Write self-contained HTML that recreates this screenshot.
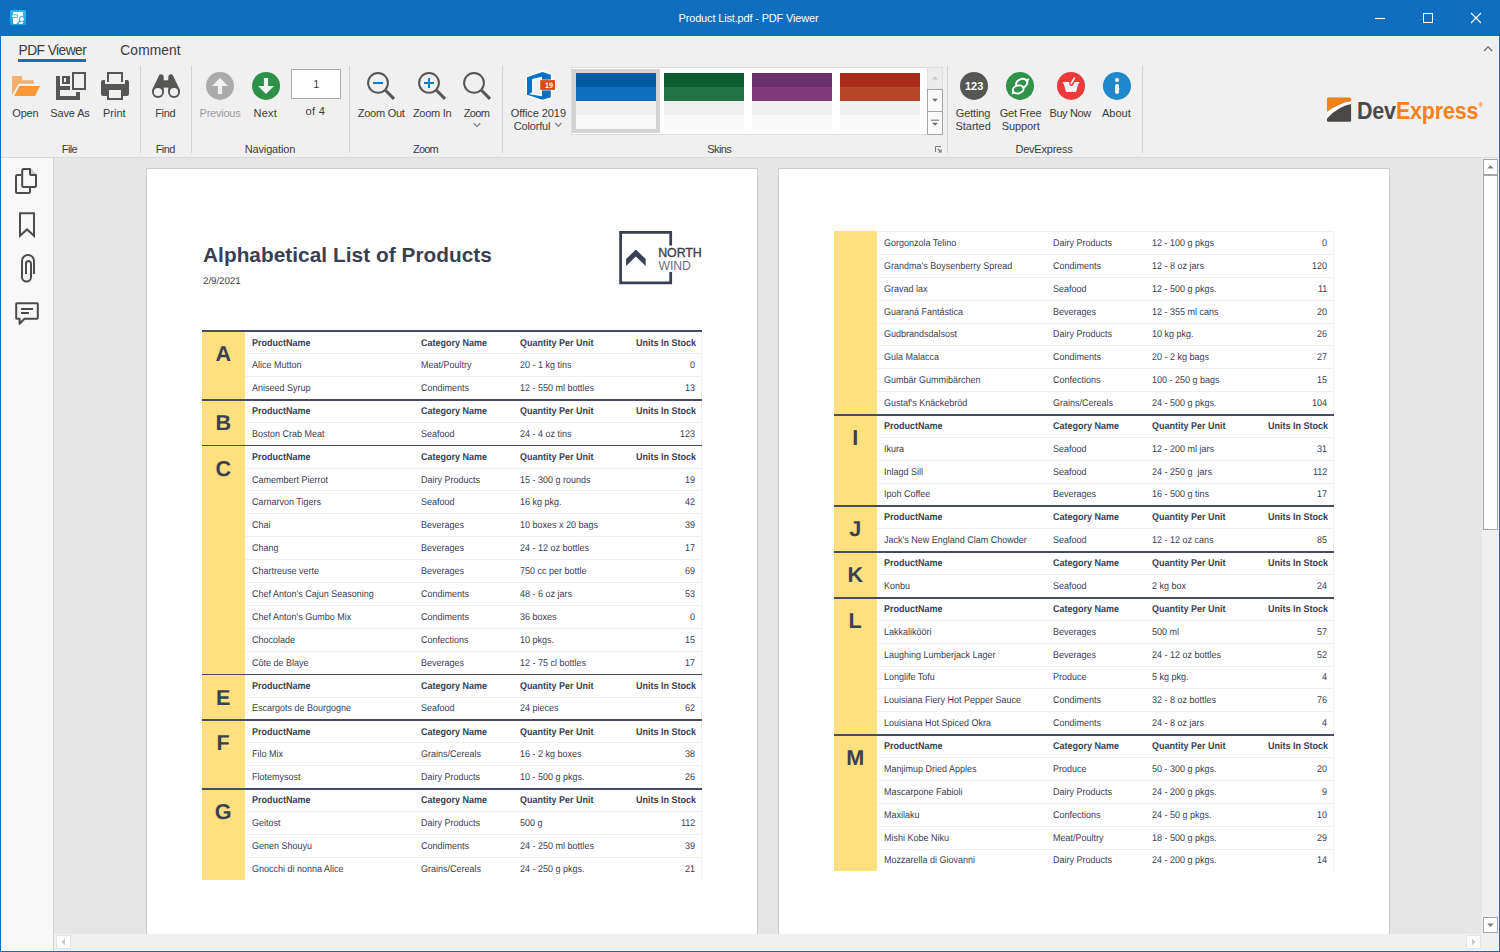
<!DOCTYPE html>
<html><head><meta charset="utf-8"><title>Product List.pdf - PDF Viewer</title>
<style>
html,body{margin:0;padding:0}
body{width:1500px;height:952px;position:relative;overflow:hidden;background:#f0f0f0;font-family:"Liberation Sans",sans-serif}
.t{position:absolute;white-space:pre;line-height:1;margin:0;padding:0}
.r{position:absolute;margin:0;padding:0}
.a{position:absolute;overflow:visible}
</style></head>
<body>
<div class="r" style="left:0px;top:0px;width:1500px;height:36px;background:#106ebe;"></div>
<div class="r" style="left:1px;top:36px;width:1498px;height:121px;background:#f0f0f0;"></div>
<div class="r" style="left:1px;top:157px;width:1498px;height:1px;background:#d9d9d9;"></div>
<svg class="a" style="left:9px;top:9px" width="18" height="18" viewBox="9 9 18 18">
<defs><linearGradient id="ai" x1="0" y1="0" x2="0" y2="1"><stop offset="0" stop-color="#2db8f1"/><stop offset="1" stop-color="#1b9fdc"/></linearGradient></defs>
<rect x="10" y="10" width="16" height="15.3" rx="1.6" fill="url(#ai)"/>
<rect x="13" y="12.1" width="10.1" height="11.8" rx="0.8" fill="#fff"/>
<rect x="11.4" y="14.4" width="6.4" height="3.4" rx="0.9" fill="#25aeea"/>
<rect x="12" y="15.2" width="5" height="1.8" rx="0.4" fill="#fff"/>
<path d="M21 20 L17 24.2" stroke="#25aeea" stroke-width="1.3" fill="none"/>
<circle cx="21.9" cy="18.9" r="2.9" fill="#25aeea"/>
<circle cx="21.9" cy="18.9" r="2" fill="#fff"/>
</svg>
<div class="t" style="left:678.50px;top:13px;font-size:11px;color:#ffffff;letter-spacing:-0.162px;">Product List.pdf - PDF Viewer</div>
<svg class="a" style="left:1370px;top:8px" width="120" height="20" viewBox="1370 8 120 20" shape-rendering="crispEdges">
<rect x="1375" y="18" width="10" height="1" fill="#fff"/>
<rect x="1423.5" y="13.5" width="9" height="9" fill="none" stroke="#fff" stroke-width="1"/>
<path d="M1471 13 L1481 23 M1481 13 L1471 23" stroke="#fff" stroke-width="1.1" fill="none" shape-rendering="geometricPrecision"/>
</svg>
<svg class="a" style="left:1482px;top:44px" width="12" height="10" viewBox="1482 44 12 10"><path d="M1484 51 L1488.1 46.9 L1492.2 51" stroke="#6b6b6b" stroke-width="1.3" fill="none"/></svg>
<div class="t" style="left:18.60px;top:44px;font-size:13.8px;color:#3b3b3b;letter-spacing:-0.577px;">PDF Viewer</div>
<div class="r" style="left:18px;top:59px;width:68px;height:3px;background:#106ebe;"></div>
<div class="t" style="left:120.30px;top:44px;font-size:13.8px;color:#3b3b3b;letter-spacing:0.098px;">Comment</div>
<div class="r" style="left:140px;top:66px;width:1px;height:87px;background:#d2d2d2;"></div>
<div class="r" style="left:191px;top:66px;width:1px;height:87px;background:#d2d2d2;"></div>
<div class="r" style="left:349px;top:66px;width:1px;height:87px;background:#d2d2d2;"></div>
<div class="r" style="left:502px;top:66px;width:1px;height:87px;background:#d2d2d2;"></div>
<div class="r" style="left:947px;top:66px;width:1px;height:87px;background:#d2d2d2;"></div>
<div class="r" style="left:1142px;top:66px;width:1px;height:87px;background:#d2d2d2;"></div>
<div class="t" style="left:61.80px;top:144px;font-size:11px;color:#3b3b3b;letter-spacing:-0.606px;">File</div>
<div class="t" style="left:155.65px;top:144px;font-size:11px;color:#3b3b3b;letter-spacing:-0.525px;">Find</div>
<div class="t" style="left:244.70px;top:144px;font-size:11px;color:#3b3b3b;letter-spacing:-0.138px;">Navigation</div>
<div class="t" style="left:413.00px;top:144px;font-size:11px;color:#3b3b3b;letter-spacing:-0.779px;">Zoom</div>
<div class="t" style="left:707.35px;top:144px;font-size:11px;color:#3b3b3b;letter-spacing:-0.640px;">Skins</div>
<div class="t" style="left:1015.50px;top:144px;font-size:11px;color:#3b3b3b;letter-spacing:-0.230px;">DevExpress</div>
<div class="t" style="left:12.30px;top:108px;font-size:11px;color:#3b3b3b;letter-spacing:-0.227px;">Open</div>
<div class="t" style="left:50.25px;top:108px;font-size:11px;color:#3b3b3b;letter-spacing:-0.123px;">Save As</div>
<div class="t" style="left:103.05px;top:108px;font-size:11px;color:#3b3b3b;letter-spacing:-0.024px;">Print</div>
<div class="t" style="left:155.20px;top:108px;font-size:11px;color:#3b3b3b;letter-spacing:-0.350px;">Find</div>
<div class="t" style="left:199.60px;top:108px;font-size:11px;color:#9b9b9b;letter-spacing:-0.250px;">Previous</div>
<div class="t" style="left:253.60px;top:108px;font-size:11px;color:#3b3b3b;letter-spacing:0.196px;">Next</div>
<div class="t" style="left:305.55px;top:106px;font-size:11px;color:#3b3b3b;letter-spacing:0.288px;">of 4</div>
<div class="t" style="left:357.70px;top:108px;font-size:11px;color:#3b3b3b;letter-spacing:-0.238px;">Zoom Out</div>
<div class="t" style="left:412.95px;top:108px;font-size:11px;color:#3b3b3b;letter-spacing:-0.293px;">Zoom In</div>
<div class="t" style="left:463.70px;top:108px;font-size:11px;color:#3b3b3b;letter-spacing:-0.629px;">Zoom</div>
<div class="t" style="left:510.65px;top:108px;font-size:11px;color:#3b3b3b;letter-spacing:-0.069px;">Office 2019</div>
<div class="t" style="left:513.65px;top:121px;font-size:11px;color:#3b3b3b;letter-spacing:-0.151px;">Colorful</div>
<div class="t" style="left:955.75px;top:108px;font-size:11px;color:#3b3b3b;letter-spacing:-0.138px;">Getting</div>
<div class="t" style="left:955.45px;top:121px;font-size:11px;color:#3b3b3b;letter-spacing:-0.024px;">Started</div>
<div class="t" style="left:999.70px;top:108px;font-size:11px;color:#3b3b3b;letter-spacing:-0.225px;">Get Free</div>
<div class="t" style="left:1001.70px;top:121px;font-size:11px;color:#3b3b3b;letter-spacing:-0.075px;">Support</div>
<div class="t" style="left:1049.45px;top:108px;font-size:11px;color:#3b3b3b;letter-spacing:-0.388px;">Buy Now</div>
<div class="t" style="left:1102.00px;top:108px;font-size:11px;color:#3b3b3b;letter-spacing:0.011px;">About</div>
<div class="r" style="left:291px;top:69px;width:50px;height:30px;background:#ffffff;border:1px solid #ababab;box-sizing:border-box;"></div>
<div class="t" style="left:313.24px;top:79px;font-size:11px;color:#3b3b3b;">1</div>
<svg class="a" style="left:0;top:60px" width="1500" height="100" viewBox="0 60 1500 100">
<path d="M12.1 76.6 Q12.1 76.1 12.6 76.1 H21.5 Q22 76.1 22 76.6 V80.3 H33.4 Q33.9 80.3 33.9 80.8 V83.85 H18.6 L12.1 95.2 Z" fill="#f5ae6b"/>
<path d="M19.4 86.1 H40.1 L35 95.9 H14.2 Z" fill="#fb9838"/>
<g fill="#565654"><rect x="56" y="76" width="4" height="24"/><rect x="56" y="96" width="24" height="4"/><rect x="76" y="92" width="4" height="8"/><rect x="60" y="86" width="10" height="4"/><rect x="62" y="76" width="8" height="8"/></g>
<rect x="64" y="78" width="2" height="4" fill="#f0f0f0"/>
<rect x="73" y="73" width="12" height="16" fill="none" stroke="#565654" stroke-width="2"/>
<path d="M108 82 V73 H122 V82" fill="none" stroke="#565654" stroke-width="2"/>
<path d="M103 80 H105 V84 H125 V80 H127 Q129 80 129 82 V94 Q129 96 127 96 H123 V100 H107 V96 H103 Q101 96 101 94 V82 Q101 80 103 80 Z" fill="#565654"/>
<rect x="109" y="90" width="12" height="8" fill="#f0f0f0"/>
<g fill="#565654"><circle cx="158" cy="92" r="6"/><circle cx="174" cy="92" r="6"/><path d="M158.55 76.4 A2.6 2.6 0 0 1 163.7 76.8 V92 H152 L152.3 89.6 Z"/><path d="M173.45 76.4 A2.6 2.6 0 0 0 168.3 76.8 V92 H180 L179.7 89.6 Z"/><rect x="163" y="80.3" width="6" height="7.3"/></g>
<circle cx="158" cy="92" r="4.1" fill="#f0f0f0"/><circle cx="174" cy="92" r="4.1" fill="#f0f0f0"/>
<circle cx="220" cy="85.9" r="14" fill="#ababab"/>
<path d="M220 78 L228 86 H222.1 V93.9 H217.9 V86 H212 Z" fill="#f1f1f1"/>
<circle cx="266.05" cy="85.9" r="14" fill="#2f9148"/>
<path d="M266 94 L274 86 H268.05 V78 H263.95 V86 H258 Z" fill="#f1f1f1"/>
<circle cx="378" cy="82.9" r="9.9" fill="none" stroke="#565654" stroke-width="2"/>
<path d="M385.4 90.3 L394 98.9" stroke="#565654" stroke-width="3" fill="none"/>
<rect x="373" y="82" width="10" height="2" fill="#0b7ccf"/>
<circle cx="429" cy="82.9" r="9.9" fill="none" stroke="#565654" stroke-width="2"/>
<path d="M436.4 90.3 L445 98.9" stroke="#565654" stroke-width="3" fill="none"/>
<rect x="424" y="82" width="10" height="2" fill="#0b7ccf"/>
<rect x="428" y="78" width="2" height="10" fill="#0b7ccf"/>
<circle cx="474" cy="82.9" r="9.9" fill="none" stroke="#565654" stroke-width="2"/>
<path d="M481.4 90.3 L490 98.9" stroke="#565654" stroke-width="3" fill="none"/>
<path d="M473.7 123.3 L477 126.5 L480.3 123.3" stroke="#7f7f7f" stroke-width="1.2" fill="none"/>
<path d="M555.3 123 L558.3 126.3 L561.3 123" stroke="#7f7f7f" stroke-width="1.2" fill="none"/>
<path d="M527 77.3 L542.4 71.9 L550.8 74.8 V97.3 L542.4 99.8 L527 94.8 Z" fill="#0672c6" stroke="#fff" stroke-width="3.2" stroke-linejoin="round"/>
<path d="M527 77.3 L542.4 71.9 L550.8 74.8 V97.3 L542.4 99.8 L527 94.8 Z" fill="#0672c6"/>
<path d="M532.1 79 L542 76.7 V96.3 L529.2 94.3 L532.1 92 Z" fill="#fff"/>
<path d="M533.6 80.2 L540.6 78.6 V94.6 L533.6 93 Z" fill="#f0f0f0"/>
<rect x="539.7" y="79.6" width="15.8" height="10.8" fill="#fff"/><rect x="540.2" y="80.1" width="14.8" height="9.8" fill="#df4a0e"/>
<text x="545.0" y="87.9" font-family="Liberation Sans" font-weight="bold" font-size="8" textLength="7.9" lengthAdjust="spacingAndGlyphs" fill="#fff" text-rendering="geometricPrecision">19</text>
<circle cx="974" cy="85.9" r="14" fill="#565654"/>
<circle cx="1020" cy="85.9" r="14" fill="#30934a"/>
<circle cx="1071" cy="85.9" r="14" fill="#ec3b3b"/>
<circle cx="1117" cy="85.9" r="14" fill="#1f88cd"/>
<g stroke="#fff" stroke-width="2" stroke-linejoin="round"><path d="M1025.6 79.6 L1029 78.9 L1027.6 82.2 Z" fill="#fff" stroke-width="0.8"/><ellipse cx="1021.7" cy="83.4" rx="5.7" ry="4.4" transform="rotate(-22 1021.7 83.4)" fill="none"/><path d="M1012.9 90.6 L1012 93.9 L1015.4 93 Z" fill="#fff" stroke-width="0.8"/><ellipse cx="1018.2" cy="89.4" rx="5.4" ry="3.9" transform="rotate(-14 1018.2 89.4)" fill="#30934a"/></g>
<path d="M1062.9 82.1 H1079.2 V83.6 H1078.4 L1076.1 92 H1066 L1063.7 83.6 H1062.9 Z" fill="#f4f4f4"/>
<path d="M1071.3 83.6 L1074.4 78" stroke="#ec3b3b" stroke-width="4.4" stroke-linecap="round"/>
<path d="M1071.3 83.4 L1074.3 78.1" stroke="#f4f4f4" stroke-width="1.7" stroke-linecap="round"/>
<circle cx="1117.05" cy="80" r="2.1" fill="#f4f4f4"/><rect x="1115" y="83.9" width="4.1" height="10.1" rx="2" fill="#f4f4f4"/>
<rect x="571.5" y="67.5" width="371" height="67" fill="#fff" stroke="#dcdcdc"/>
<rect x="572" y="69" width="88" height="64" fill="#d3d3d3"/>
<rect x="576" y="73" width="80" height="14" fill="#005a9e"/><rect x="576" y="87" width="80" height="14" fill="#106ebe"/><rect x="576" y="101" width="80" height="14" fill="#f0f0f0"/><rect x="576" y="115" width="80" height="14" fill="#f8f8f8"/>
<rect x="664" y="73" width="80" height="14" fill="#0e5c2f"/><rect x="664" y="87" width="80" height="14" fill="#217346"/><rect x="664" y="101" width="80" height="14" fill="#f0f0f0"/><rect x="664" y="115" width="80" height="14" fill="#f8f8f8"/>
<rect x="752" y="73" width="80" height="14" fill="#68306d"/><rect x="752" y="87" width="80" height="14" fill="#80397b"/><rect x="752" y="101" width="80" height="14" fill="#f0f0f0"/><rect x="752" y="115" width="80" height="14" fill="#f8f8f8"/>
<rect x="840" y="73" width="80" height="14" fill="#a92b1a"/><rect x="840" y="87" width="80" height="14" fill="#b7472a"/><rect x="840" y="101" width="80" height="14" fill="#f0f0f0"/><rect x="840" y="115" width="80" height="14" fill="#f8f8f8"/>
<rect x="927.5" y="67.5" width="15" height="22" fill="#ececec" stroke="#dedede"/>
<rect x="927.5" y="89.5" width="15" height="22" fill="#fafafa" stroke="#a3a3a3"/>
<rect x="927.5" y="111.5" width="15" height="23" fill="#fafafa" stroke="#a3a3a3"/>
<path d="M932 79.4 L935 76.4 L938 79.4 Z" fill="#c6c6c6"/>
<path d="M932 98.8 H938 L935 101.8 Z" fill="#6e6e6e"/>
<rect x="931" y="119.7" width="8" height="1" fill="#6e6e6e"/><path d="M932 122.8 H938 L935 125.8 Z" fill="#6e6e6e"/>
<path d="M935.5 152 V146.5 H941" fill="none" stroke="#7a7a7a" stroke-width="1"/><path d="M937.8 148.8 L941 152" stroke="#7a7a7a" stroke-width="1.2"/><path d="M941.6 149 V152.6 H938 Z" fill="#7a7a7a"/>
<defs><clipPath id="dxc"><rect x="1327" y="97.85" width="24.1" height="24" rx="1.7"/></clipPath></defs>
<g clip-path="url(#dxc)"><rect x="1326" y="97" width="27" height="26" fill="#4a4846"/><path d="M1326 97 H1352 V101.07 Q1338.8 102.6 1326.5 112.1 L1326 112.5 Z" fill="#f78117"/><path d="M1352 100.95 Q1338.8 102.6 1326 112.5 V119.5 Q1338.2 106 1352 103.8 Z" fill="#fff"/></g>
</svg>
<div class="t" style="left:965.00px;top:81px;font-size:11px;color:#fff;font-weight:bold;letter-spacing:-0.051px;">123</div>
<div class="t" style="left:1357.4px;top:99px;font-size:24.8px;font-weight:bold;transform-origin:0 0;transform:scaleX(0.866);letter-spacing:-0.2px"><span style="color:#4a4a4a">Dev</span><span style="color:#f78119">Express</span></div>
<div class="t" style="left:1478.6px;top:101.5px;font-size:6px;font-weight:bold;color:#f78119">&#174;</div>
<div class="r" style="left:1px;top:158px;width:52px;height:793px;background:#f8f8f8;"></div>
<div class="r" style="left:53px;top:158px;width:1px;height:793px;background:#d2d2d2;"></div>
<div class="r" style="left:54px;top:158px;width:1428px;height:776px;background:#e6e6e6;overflow:hidden"></div>
<div class="r" style="left:0;top:158px;width:1482px;height:776px;overflow:hidden"><div class="r" style="left:0;top:-158px;width:1500px;height:952px">
<div class="r" style="left:146px;top:168px;width:612px;height:800px;background:#ffffff;border:1px solid #cbcbcb;box-sizing:border-box;"></div>
<div class="r" style="left:778px;top:168px;width:612px;height:800px;background:#ffffff;border:1px solid #cbcbcb;box-sizing:border-box;"></div>
<div class="t" style="left:203.00px;top:245px;font-size:20.8px;color:#3a4054;font-weight:bold;letter-spacing:0.042px;">Alphabetical List of Products</div>
<div class="t" style="left:203.00px;top:277px;font-size:9.8px;color:#3a4054;letter-spacing:-0.068px;text-rendering:geometricPrecision;">2/9/2021</div>
<svg class="a" style="left:610px;top:225px" width="100" height="65" viewBox="610 225 100 65">
<path d="M670.7 245.6 V232.4 H620.6 V282.8 H670.7 V272" fill="none" stroke="#3a4054" stroke-width="2.75"/>
<path d="M626.1 259 L635.8 249.6 L645.7 259 V266.1 L635.8 256.6 L626.1 266.1 Z" fill="#3a4054"/>
</svg>
<div class="t" style="left:658.20px;top:247px;font-size:12.4px;color:#3a4054;letter-spacing:-0.052px;-webkit-text-stroke:0.35px #3a4054;">NORTH</div>
<div class="t" style="left:658.60px;top:260px;font-size:12.2px;color:#6a6f81;letter-spacing:-0.056px;">WIND</div>
<div class="r" style="left:202px;top:330.20px;width:43px;height:549.48px;background:#ffe07f;"></div>
<div class="r" style="left:701px;top:330.20px;width:1px;height:549.48px;background:#f2f2f2;"></div>
<div class="r" style="left:202px;top:330.20px;width:500px;height:1.65px;background:#474d61;"></div>
<div class="t" style="left:215.40px;top:343px;font-size:21.6px;color:#3a4054;font-weight:bold;text-rendering:geometricPrecision;">A</div>
<div class="t" style="left:251.50px;top:339px;font-size:9.8px;color:#3a4054;font-weight:bold;transform-origin:0 0;transform:scaleX(0.9184);text-rendering:geometricPrecision;">ProductName</div>
<div class="t" style="left:420.60px;top:339px;font-size:9.8px;color:#3a4054;font-weight:bold;transform-origin:0 0;transform:scaleX(0.9184);text-rendering:geometricPrecision;">Category Name</div>
<div class="t" style="left:519.50px;top:339px;font-size:9.8px;color:#3a4054;font-weight:bold;transform-origin:0 0;transform:scaleX(0.9184);text-rendering:geometricPrecision;">Quantity Per Unit</div>
<div class="t" style="left:635.99px;top:339px;font-size:9.8px;color:#3a4054;font-weight:bold;transform-origin:0 0;transform:scaleX(0.9184);text-rendering:geometricPrecision;">Units In Stock</div>
<div class="r" style="left:245px;top:353.09px;width:457px;height:0.8px;background:#f0f0f0;"></div>
<div class="t" style="left:251.50px;top:361px;font-size:9.8px;color:#3a4054;transform-origin:0 0;transform:scaleX(0.9184);text-rendering:geometricPrecision;">Alice Mutton</div>
<div class="t" style="left:420.60px;top:361px;font-size:9.8px;color:#3a4054;transform-origin:0 0;transform:scaleX(0.9184);text-rendering:geometricPrecision;">Meat/Poultry</div>
<div class="t" style="left:519.50px;top:361px;font-size:9.8px;color:#3a4054;transform-origin:0 0;transform:scaleX(0.9184);text-rendering:geometricPrecision;">20 - 1 kg tins</div>
<div class="t" style="left:690.39px;top:361px;font-size:9.8px;color:#3a4054;transform-origin:0 0;transform:scaleX(0.9184);text-rendering:geometricPrecision;">0</div>
<div class="r" style="left:245px;top:375.99px;width:457px;height:0.8px;background:#f0f0f0;"></div>
<div class="t" style="left:251.50px;top:384px;font-size:9.8px;color:#3a4054;transform-origin:0 0;transform:scaleX(0.9184);text-rendering:geometricPrecision;">Aniseed Syrup</div>
<div class="t" style="left:420.60px;top:384px;font-size:9.8px;color:#3a4054;transform-origin:0 0;transform:scaleX(0.9184);text-rendering:geometricPrecision;">Condiments</div>
<div class="t" style="left:519.50px;top:384px;font-size:9.8px;color:#3a4054;transform-origin:0 0;transform:scaleX(0.9184);text-rendering:geometricPrecision;">12 - 550 ml bottles</div>
<div class="t" style="left:685.39px;top:384px;font-size:9.8px;color:#3a4054;transform-origin:0 0;transform:scaleX(0.9184);text-rendering:geometricPrecision;">13</div>
<div class="r" style="left:202px;top:398.88px;width:500px;height:1.65px;background:#474d61;"></div>
<div class="t" style="left:215.40px;top:412px;font-size:21.6px;color:#3a4054;font-weight:bold;text-rendering:geometricPrecision;">B</div>
<div class="t" style="left:251.50px;top:407px;font-size:9.8px;color:#3a4054;font-weight:bold;transform-origin:0 0;transform:scaleX(0.9184);text-rendering:geometricPrecision;">ProductName</div>
<div class="t" style="left:420.60px;top:407px;font-size:9.8px;color:#3a4054;font-weight:bold;transform-origin:0 0;transform:scaleX(0.9184);text-rendering:geometricPrecision;">Category Name</div>
<div class="t" style="left:519.50px;top:407px;font-size:9.8px;color:#3a4054;font-weight:bold;transform-origin:0 0;transform:scaleX(0.9184);text-rendering:geometricPrecision;">Quantity Per Unit</div>
<div class="t" style="left:635.99px;top:407px;font-size:9.8px;color:#3a4054;font-weight:bold;transform-origin:0 0;transform:scaleX(0.9184);text-rendering:geometricPrecision;">Units In Stock</div>
<div class="r" style="left:245px;top:421.78px;width:457px;height:0.8px;background:#f0f0f0;"></div>
<div class="t" style="left:251.50px;top:430px;font-size:9.8px;color:#3a4054;transform-origin:0 0;transform:scaleX(0.9184);text-rendering:geometricPrecision;">Boston Crab Meat</div>
<div class="t" style="left:420.60px;top:430px;font-size:9.8px;color:#3a4054;transform-origin:0 0;transform:scaleX(0.9184);text-rendering:geometricPrecision;">Seafood</div>
<div class="t" style="left:519.50px;top:430px;font-size:9.8px;color:#3a4054;transform-origin:0 0;transform:scaleX(0.9184);text-rendering:geometricPrecision;">24 - 4 oz tins</div>
<div class="t" style="left:680.38px;top:430px;font-size:9.8px;color:#3a4054;transform-origin:0 0;transform:scaleX(0.9184);text-rendering:geometricPrecision;">123</div>
<div class="r" style="left:202px;top:444.67px;width:500px;height:1.65px;background:#474d61;"></div>
<div class="t" style="left:215.40px;top:458px;font-size:21.6px;color:#3a4054;font-weight:bold;text-rendering:geometricPrecision;">C</div>
<div class="t" style="left:251.50px;top:453px;font-size:9.8px;color:#3a4054;font-weight:bold;transform-origin:0 0;transform:scaleX(0.9184);text-rendering:geometricPrecision;">ProductName</div>
<div class="t" style="left:420.60px;top:453px;font-size:9.8px;color:#3a4054;font-weight:bold;transform-origin:0 0;transform:scaleX(0.9184);text-rendering:geometricPrecision;">Category Name</div>
<div class="t" style="left:519.50px;top:453px;font-size:9.8px;color:#3a4054;font-weight:bold;transform-origin:0 0;transform:scaleX(0.9184);text-rendering:geometricPrecision;">Quantity Per Unit</div>
<div class="t" style="left:635.99px;top:453px;font-size:9.8px;color:#3a4054;font-weight:bold;transform-origin:0 0;transform:scaleX(0.9184);text-rendering:geometricPrecision;">Units In Stock</div>
<div class="r" style="left:245px;top:467.57px;width:457px;height:0.8px;background:#f0f0f0;"></div>
<div class="t" style="left:251.50px;top:476px;font-size:9.8px;color:#3a4054;transform-origin:0 0;transform:scaleX(0.9184);text-rendering:geometricPrecision;">Camembert Pierrot</div>
<div class="t" style="left:420.60px;top:476px;font-size:9.8px;color:#3a4054;transform-origin:0 0;transform:scaleX(0.9184);text-rendering:geometricPrecision;">Dairy Products</div>
<div class="t" style="left:519.50px;top:476px;font-size:9.8px;color:#3a4054;transform-origin:0 0;transform:scaleX(0.9184);text-rendering:geometricPrecision;">15 - 300 g rounds</div>
<div class="t" style="left:685.39px;top:476px;font-size:9.8px;color:#3a4054;transform-origin:0 0;transform:scaleX(0.9184);text-rendering:geometricPrecision;">19</div>
<div class="r" style="left:245px;top:490.46px;width:457px;height:0.8px;background:#f0f0f0;"></div>
<div class="t" style="left:251.50px;top:498px;font-size:9.8px;color:#3a4054;transform-origin:0 0;transform:scaleX(0.9184);text-rendering:geometricPrecision;">Carnarvon Tigers</div>
<div class="t" style="left:420.60px;top:498px;font-size:9.8px;color:#3a4054;transform-origin:0 0;transform:scaleX(0.9184);text-rendering:geometricPrecision;">Seafood</div>
<div class="t" style="left:519.50px;top:498px;font-size:9.8px;color:#3a4054;transform-origin:0 0;transform:scaleX(0.9184);text-rendering:geometricPrecision;">16 kg pkg.</div>
<div class="t" style="left:685.39px;top:498px;font-size:9.8px;color:#3a4054;transform-origin:0 0;transform:scaleX(0.9184);text-rendering:geometricPrecision;">42</div>
<div class="r" style="left:245px;top:513.36px;width:457px;height:0.8px;background:#f0f0f0;"></div>
<div class="t" style="left:251.50px;top:521px;font-size:9.8px;color:#3a4054;transform-origin:0 0;transform:scaleX(0.9184);text-rendering:geometricPrecision;">Chai</div>
<div class="t" style="left:420.60px;top:521px;font-size:9.8px;color:#3a4054;transform-origin:0 0;transform:scaleX(0.9184);text-rendering:geometricPrecision;">Beverages</div>
<div class="t" style="left:519.50px;top:521px;font-size:9.8px;color:#3a4054;transform-origin:0 0;transform:scaleX(0.9184);text-rendering:geometricPrecision;">10 boxes x 20 bags</div>
<div class="t" style="left:685.39px;top:521px;font-size:9.8px;color:#3a4054;transform-origin:0 0;transform:scaleX(0.9184);text-rendering:geometricPrecision;">39</div>
<div class="r" style="left:245px;top:536.25px;width:457px;height:0.8px;background:#f0f0f0;"></div>
<div class="t" style="left:251.50px;top:544px;font-size:9.8px;color:#3a4054;transform-origin:0 0;transform:scaleX(0.9184);text-rendering:geometricPrecision;">Chang</div>
<div class="t" style="left:420.60px;top:544px;font-size:9.8px;color:#3a4054;transform-origin:0 0;transform:scaleX(0.9184);text-rendering:geometricPrecision;">Beverages</div>
<div class="t" style="left:519.50px;top:544px;font-size:9.8px;color:#3a4054;transform-origin:0 0;transform:scaleX(0.9184);text-rendering:geometricPrecision;">24 - 12 oz bottles</div>
<div class="t" style="left:685.39px;top:544px;font-size:9.8px;color:#3a4054;transform-origin:0 0;transform:scaleX(0.9184);text-rendering:geometricPrecision;">17</div>
<div class="r" style="left:245px;top:559.15px;width:457px;height:0.8px;background:#f0f0f0;"></div>
<div class="t" style="left:251.50px;top:567px;font-size:9.8px;color:#3a4054;transform-origin:0 0;transform:scaleX(0.9184);text-rendering:geometricPrecision;">Chartreuse verte</div>
<div class="t" style="left:420.60px;top:567px;font-size:9.8px;color:#3a4054;transform-origin:0 0;transform:scaleX(0.9184);text-rendering:geometricPrecision;">Beverages</div>
<div class="t" style="left:519.50px;top:567px;font-size:9.8px;color:#3a4054;transform-origin:0 0;transform:scaleX(0.9184);text-rendering:geometricPrecision;">750 cc per bottle</div>
<div class="t" style="left:685.39px;top:567px;font-size:9.8px;color:#3a4054;transform-origin:0 0;transform:scaleX(0.9184);text-rendering:geometricPrecision;">69</div>
<div class="r" style="left:245px;top:582.04px;width:457px;height:0.8px;background:#f0f0f0;"></div>
<div class="t" style="left:251.50px;top:590px;font-size:9.8px;color:#3a4054;transform-origin:0 0;transform:scaleX(0.9184);text-rendering:geometricPrecision;">Chef Anton's Cajun Seasoning</div>
<div class="t" style="left:420.60px;top:590px;font-size:9.8px;color:#3a4054;transform-origin:0 0;transform:scaleX(0.9184);text-rendering:geometricPrecision;">Condiments</div>
<div class="t" style="left:519.50px;top:590px;font-size:9.8px;color:#3a4054;transform-origin:0 0;transform:scaleX(0.9184);text-rendering:geometricPrecision;">48 - 6 oz jars</div>
<div class="t" style="left:685.39px;top:590px;font-size:9.8px;color:#3a4054;transform-origin:0 0;transform:scaleX(0.9184);text-rendering:geometricPrecision;">53</div>
<div class="r" style="left:245px;top:604.94px;width:457px;height:0.8px;background:#f0f0f0;"></div>
<div class="t" style="left:251.50px;top:613px;font-size:9.8px;color:#3a4054;transform-origin:0 0;transform:scaleX(0.9184);text-rendering:geometricPrecision;">Chef Anton's Gumbo Mix</div>
<div class="t" style="left:420.60px;top:613px;font-size:9.8px;color:#3a4054;transform-origin:0 0;transform:scaleX(0.9184);text-rendering:geometricPrecision;">Condiments</div>
<div class="t" style="left:519.50px;top:613px;font-size:9.8px;color:#3a4054;transform-origin:0 0;transform:scaleX(0.9184);text-rendering:geometricPrecision;">36 boxes</div>
<div class="t" style="left:690.39px;top:613px;font-size:9.8px;color:#3a4054;transform-origin:0 0;transform:scaleX(0.9184);text-rendering:geometricPrecision;">0</div>
<div class="r" style="left:245px;top:627.84px;width:457px;height:0.8px;background:#f0f0f0;"></div>
<div class="t" style="left:251.50px;top:636px;font-size:9.8px;color:#3a4054;transform-origin:0 0;transform:scaleX(0.9184);text-rendering:geometricPrecision;">Chocolade</div>
<div class="t" style="left:420.60px;top:636px;font-size:9.8px;color:#3a4054;transform-origin:0 0;transform:scaleX(0.9184);text-rendering:geometricPrecision;">Confections</div>
<div class="t" style="left:519.50px;top:636px;font-size:9.8px;color:#3a4054;transform-origin:0 0;transform:scaleX(0.9184);text-rendering:geometricPrecision;">10 pkgs.</div>
<div class="t" style="left:685.39px;top:636px;font-size:9.8px;color:#3a4054;transform-origin:0 0;transform:scaleX(0.9184);text-rendering:geometricPrecision;">15</div>
<div class="r" style="left:245px;top:650.73px;width:457px;height:0.8px;background:#f0f0f0;"></div>
<div class="t" style="left:251.50px;top:659px;font-size:9.8px;color:#3a4054;transform-origin:0 0;transform:scaleX(0.9184);text-rendering:geometricPrecision;">Côte de Blaye</div>
<div class="t" style="left:420.60px;top:659px;font-size:9.8px;color:#3a4054;transform-origin:0 0;transform:scaleX(0.9184);text-rendering:geometricPrecision;">Beverages</div>
<div class="t" style="left:519.50px;top:659px;font-size:9.8px;color:#3a4054;transform-origin:0 0;transform:scaleX(0.9184);text-rendering:geometricPrecision;">12 - 75 cl bottles</div>
<div class="t" style="left:685.39px;top:659px;font-size:9.8px;color:#3a4054;transform-origin:0 0;transform:scaleX(0.9184);text-rendering:geometricPrecision;">17</div>
<div class="r" style="left:202px;top:673.62px;width:500px;height:1.65px;background:#474d61;"></div>
<div class="t" style="left:216.00px;top:687px;font-size:21.6px;color:#3a4054;font-weight:bold;text-rendering:geometricPrecision;">E</div>
<div class="t" style="left:251.50px;top:682px;font-size:9.8px;color:#3a4054;font-weight:bold;transform-origin:0 0;transform:scaleX(0.9184);text-rendering:geometricPrecision;">ProductName</div>
<div class="t" style="left:420.60px;top:682px;font-size:9.8px;color:#3a4054;font-weight:bold;transform-origin:0 0;transform:scaleX(0.9184);text-rendering:geometricPrecision;">Category Name</div>
<div class="t" style="left:519.50px;top:682px;font-size:9.8px;color:#3a4054;font-weight:bold;transform-origin:0 0;transform:scaleX(0.9184);text-rendering:geometricPrecision;">Quantity Per Unit</div>
<div class="t" style="left:635.99px;top:682px;font-size:9.8px;color:#3a4054;font-weight:bold;transform-origin:0 0;transform:scaleX(0.9184);text-rendering:geometricPrecision;">Units In Stock</div>
<div class="r" style="left:245px;top:696.52px;width:457px;height:0.8px;background:#f0f0f0;"></div>
<div class="t" style="left:251.50px;top:704px;font-size:9.8px;color:#3a4054;transform-origin:0 0;transform:scaleX(0.9184);text-rendering:geometricPrecision;">Escargots de Bourgogne</div>
<div class="t" style="left:420.60px;top:704px;font-size:9.8px;color:#3a4054;transform-origin:0 0;transform:scaleX(0.9184);text-rendering:geometricPrecision;">Seafood</div>
<div class="t" style="left:519.50px;top:704px;font-size:9.8px;color:#3a4054;transform-origin:0 0;transform:scaleX(0.9184);text-rendering:geometricPrecision;">24 pieces</div>
<div class="t" style="left:685.39px;top:704px;font-size:9.8px;color:#3a4054;transform-origin:0 0;transform:scaleX(0.9184);text-rendering:geometricPrecision;">62</div>
<div class="r" style="left:202px;top:719.41px;width:500px;height:1.65px;background:#474d61;"></div>
<div class="t" style="left:216.60px;top:732px;font-size:21.6px;color:#3a4054;font-weight:bold;text-rendering:geometricPrecision;">F</div>
<div class="t" style="left:251.50px;top:728px;font-size:9.8px;color:#3a4054;font-weight:bold;transform-origin:0 0;transform:scaleX(0.9184);text-rendering:geometricPrecision;">ProductName</div>
<div class="t" style="left:420.60px;top:728px;font-size:9.8px;color:#3a4054;font-weight:bold;transform-origin:0 0;transform:scaleX(0.9184);text-rendering:geometricPrecision;">Category Name</div>
<div class="t" style="left:519.50px;top:728px;font-size:9.8px;color:#3a4054;font-weight:bold;transform-origin:0 0;transform:scaleX(0.9184);text-rendering:geometricPrecision;">Quantity Per Unit</div>
<div class="t" style="left:635.99px;top:728px;font-size:9.8px;color:#3a4054;font-weight:bold;transform-origin:0 0;transform:scaleX(0.9184);text-rendering:geometricPrecision;">Units In Stock</div>
<div class="r" style="left:245px;top:742.31px;width:457px;height:0.8px;background:#f0f0f0;"></div>
<div class="t" style="left:251.50px;top:750px;font-size:9.8px;color:#3a4054;transform-origin:0 0;transform:scaleX(0.9184);text-rendering:geometricPrecision;">Filo Mix</div>
<div class="t" style="left:420.60px;top:750px;font-size:9.8px;color:#3a4054;transform-origin:0 0;transform:scaleX(0.9184);text-rendering:geometricPrecision;">Grains/Cereals</div>
<div class="t" style="left:519.50px;top:750px;font-size:9.8px;color:#3a4054;transform-origin:0 0;transform:scaleX(0.9184);text-rendering:geometricPrecision;">16 - 2 kg boxes</div>
<div class="t" style="left:685.39px;top:750px;font-size:9.8px;color:#3a4054;transform-origin:0 0;transform:scaleX(0.9184);text-rendering:geometricPrecision;">38</div>
<div class="r" style="left:245px;top:765.20px;width:457px;height:0.8px;background:#f0f0f0;"></div>
<div class="t" style="left:251.50px;top:773px;font-size:9.8px;color:#3a4054;transform-origin:0 0;transform:scaleX(0.9184);text-rendering:geometricPrecision;">Flotemysost</div>
<div class="t" style="left:420.60px;top:773px;font-size:9.8px;color:#3a4054;transform-origin:0 0;transform:scaleX(0.9184);text-rendering:geometricPrecision;">Dairy Products</div>
<div class="t" style="left:519.50px;top:773px;font-size:9.8px;color:#3a4054;transform-origin:0 0;transform:scaleX(0.9184);text-rendering:geometricPrecision;">10 - 500 g pkgs.</div>
<div class="t" style="left:685.39px;top:773px;font-size:9.8px;color:#3a4054;transform-origin:0 0;transform:scaleX(0.9184);text-rendering:geometricPrecision;">26</div>
<div class="r" style="left:202px;top:788.10px;width:500px;height:1.65px;background:#474d61;"></div>
<div class="t" style="left:214.80px;top:801px;font-size:21.6px;color:#3a4054;font-weight:bold;text-rendering:geometricPrecision;">G</div>
<div class="t" style="left:251.50px;top:796px;font-size:9.8px;color:#3a4054;font-weight:bold;transform-origin:0 0;transform:scaleX(0.9184);text-rendering:geometricPrecision;">ProductName</div>
<div class="t" style="left:420.60px;top:796px;font-size:9.8px;color:#3a4054;font-weight:bold;transform-origin:0 0;transform:scaleX(0.9184);text-rendering:geometricPrecision;">Category Name</div>
<div class="t" style="left:519.50px;top:796px;font-size:9.8px;color:#3a4054;font-weight:bold;transform-origin:0 0;transform:scaleX(0.9184);text-rendering:geometricPrecision;">Quantity Per Unit</div>
<div class="t" style="left:635.99px;top:796px;font-size:9.8px;color:#3a4054;font-weight:bold;transform-origin:0 0;transform:scaleX(0.9184);text-rendering:geometricPrecision;">Units In Stock</div>
<div class="r" style="left:245px;top:811.00px;width:457px;height:0.8px;background:#f0f0f0;"></div>
<div class="t" style="left:251.50px;top:819px;font-size:9.8px;color:#3a4054;transform-origin:0 0;transform:scaleX(0.9184);text-rendering:geometricPrecision;">Geitost</div>
<div class="t" style="left:420.60px;top:819px;font-size:9.8px;color:#3a4054;transform-origin:0 0;transform:scaleX(0.9184);text-rendering:geometricPrecision;">Dairy Products</div>
<div class="t" style="left:519.50px;top:819px;font-size:9.8px;color:#3a4054;transform-origin:0 0;transform:scaleX(0.9184);text-rendering:geometricPrecision;">500 g</div>
<div class="t" style="left:681.05px;top:819px;font-size:9.8px;color:#3a4054;transform-origin:0 0;transform:scaleX(0.9184);text-rendering:geometricPrecision;">112</div>
<div class="r" style="left:245px;top:833.89px;width:457px;height:0.8px;background:#f0f0f0;"></div>
<div class="t" style="left:251.50px;top:842px;font-size:9.8px;color:#3a4054;transform-origin:0 0;transform:scaleX(0.9184);text-rendering:geometricPrecision;">Genen Shouyu</div>
<div class="t" style="left:420.60px;top:842px;font-size:9.8px;color:#3a4054;transform-origin:0 0;transform:scaleX(0.9184);text-rendering:geometricPrecision;">Condiments</div>
<div class="t" style="left:519.50px;top:842px;font-size:9.8px;color:#3a4054;transform-origin:0 0;transform:scaleX(0.9184);text-rendering:geometricPrecision;">24 - 250 ml bottles</div>
<div class="t" style="left:685.39px;top:842px;font-size:9.8px;color:#3a4054;transform-origin:0 0;transform:scaleX(0.9184);text-rendering:geometricPrecision;">39</div>
<div class="r" style="left:245px;top:856.79px;width:457px;height:0.8px;background:#f0f0f0;"></div>
<div class="t" style="left:251.50px;top:865px;font-size:9.8px;color:#3a4054;transform-origin:0 0;transform:scaleX(0.9184);text-rendering:geometricPrecision;">Gnocchi di nonna Alice</div>
<div class="t" style="left:420.60px;top:865px;font-size:9.8px;color:#3a4054;transform-origin:0 0;transform:scaleX(0.9184);text-rendering:geometricPrecision;">Grains/Cereals</div>
<div class="t" style="left:519.50px;top:865px;font-size:9.8px;color:#3a4054;transform-origin:0 0;transform:scaleX(0.9184);text-rendering:geometricPrecision;">24 - 250 g pkgs.</div>
<div class="t" style="left:685.39px;top:865px;font-size:9.8px;color:#3a4054;transform-origin:0 0;transform:scaleX(0.9184);text-rendering:geometricPrecision;">21</div>
<div class="r" style="left:834px;top:231.05px;width:43px;height:640.36px;background:#ffe07f;"></div>
<div class="r" style="left:1333px;top:231.05px;width:1px;height:640.36px;background:#f2f2f2;"></div>
<div class="r" style="left:877px;top:231.05px;width:457px;height:0.8px;background:#f0f0f0;"></div>
<div class="t" style="left:883.50px;top:239px;font-size:9.8px;color:#3a4054;transform-origin:0 0;transform:scaleX(0.9184);text-rendering:geometricPrecision;">Gorgonzola Telino</div>
<div class="t" style="left:1052.60px;top:239px;font-size:9.8px;color:#3a4054;transform-origin:0 0;transform:scaleX(0.9184);text-rendering:geometricPrecision;">Dairy Products</div>
<div class="t" style="left:1151.50px;top:239px;font-size:9.8px;color:#3a4054;transform-origin:0 0;transform:scaleX(0.9184);text-rendering:geometricPrecision;">12 - 100 g pkgs</div>
<div class="t" style="left:1322.39px;top:239px;font-size:9.8px;color:#3a4054;transform-origin:0 0;transform:scaleX(0.9184);text-rendering:geometricPrecision;">0</div>
<div class="r" style="left:877px;top:253.92px;width:457px;height:0.8px;background:#f0f0f0;"></div>
<div class="t" style="left:883.50px;top:262px;font-size:9.8px;color:#3a4054;transform-origin:0 0;transform:scaleX(0.9184);text-rendering:geometricPrecision;">Grandma's Boysenberry Spread</div>
<div class="t" style="left:1052.60px;top:262px;font-size:9.8px;color:#3a4054;transform-origin:0 0;transform:scaleX(0.9184);text-rendering:geometricPrecision;">Condiments</div>
<div class="t" style="left:1151.50px;top:262px;font-size:9.8px;color:#3a4054;transform-origin:0 0;transform:scaleX(0.9184);text-rendering:geometricPrecision;">12 - 8 oz jars</div>
<div class="t" style="left:1312.38px;top:262px;font-size:9.8px;color:#3a4054;transform-origin:0 0;transform:scaleX(0.9184);text-rendering:geometricPrecision;">120</div>
<div class="r" style="left:877px;top:276.79px;width:457px;height:0.8px;background:#f0f0f0;"></div>
<div class="t" style="left:883.50px;top:285px;font-size:9.8px;color:#3a4054;transform-origin:0 0;transform:scaleX(0.9184);text-rendering:geometricPrecision;">Gravad lax</div>
<div class="t" style="left:1052.60px;top:285px;font-size:9.8px;color:#3a4054;transform-origin:0 0;transform:scaleX(0.9184);text-rendering:geometricPrecision;">Seafood</div>
<div class="t" style="left:1151.50px;top:285px;font-size:9.8px;color:#3a4054;transform-origin:0 0;transform:scaleX(0.9184);text-rendering:geometricPrecision;">12 - 500 g pkgs.</div>
<div class="t" style="left:1318.06px;top:285px;font-size:9.8px;color:#3a4054;transform-origin:0 0;transform:scaleX(0.9184);text-rendering:geometricPrecision;">11</div>
<div class="r" style="left:877px;top:299.66px;width:457px;height:0.8px;background:#f0f0f0;"></div>
<div class="t" style="left:883.50px;top:308px;font-size:9.8px;color:#3a4054;transform-origin:0 0;transform:scaleX(0.9184);text-rendering:geometricPrecision;">Guaraná Fantástica</div>
<div class="t" style="left:1052.60px;top:308px;font-size:9.8px;color:#3a4054;transform-origin:0 0;transform:scaleX(0.9184);text-rendering:geometricPrecision;">Beverages</div>
<div class="t" style="left:1151.50px;top:308px;font-size:9.8px;color:#3a4054;transform-origin:0 0;transform:scaleX(0.9184);text-rendering:geometricPrecision;">12 - 355 ml cans</div>
<div class="t" style="left:1317.39px;top:308px;font-size:9.8px;color:#3a4054;transform-origin:0 0;transform:scaleX(0.9184);text-rendering:geometricPrecision;">20</div>
<div class="r" style="left:877px;top:322.53px;width:457px;height:0.8px;background:#f0f0f0;"></div>
<div class="t" style="left:883.50px;top:330px;font-size:9.8px;color:#3a4054;transform-origin:0 0;transform:scaleX(0.9184);text-rendering:geometricPrecision;">Gudbrandsdalsost</div>
<div class="t" style="left:1052.60px;top:330px;font-size:9.8px;color:#3a4054;transform-origin:0 0;transform:scaleX(0.9184);text-rendering:geometricPrecision;">Dairy Products</div>
<div class="t" style="left:1151.50px;top:330px;font-size:9.8px;color:#3a4054;transform-origin:0 0;transform:scaleX(0.9184);text-rendering:geometricPrecision;">10 kg pkg.</div>
<div class="t" style="left:1317.39px;top:330px;font-size:9.8px;color:#3a4054;transform-origin:0 0;transform:scaleX(0.9184);text-rendering:geometricPrecision;">26</div>
<div class="r" style="left:877px;top:345.40px;width:457px;height:0.8px;background:#f0f0f0;"></div>
<div class="t" style="left:883.50px;top:353px;font-size:9.8px;color:#3a4054;transform-origin:0 0;transform:scaleX(0.9184);text-rendering:geometricPrecision;">Gula Malacca</div>
<div class="t" style="left:1052.60px;top:353px;font-size:9.8px;color:#3a4054;transform-origin:0 0;transform:scaleX(0.9184);text-rendering:geometricPrecision;">Condiments</div>
<div class="t" style="left:1151.50px;top:353px;font-size:9.8px;color:#3a4054;transform-origin:0 0;transform:scaleX(0.9184);text-rendering:geometricPrecision;">20 - 2 kg bags</div>
<div class="t" style="left:1317.39px;top:353px;font-size:9.8px;color:#3a4054;transform-origin:0 0;transform:scaleX(0.9184);text-rendering:geometricPrecision;">27</div>
<div class="r" style="left:877px;top:368.27px;width:457px;height:0.8px;background:#f0f0f0;"></div>
<div class="t" style="left:883.50px;top:376px;font-size:9.8px;color:#3a4054;transform-origin:0 0;transform:scaleX(0.9184);text-rendering:geometricPrecision;">Gumbär Gummibärchen</div>
<div class="t" style="left:1052.60px;top:376px;font-size:9.8px;color:#3a4054;transform-origin:0 0;transform:scaleX(0.9184);text-rendering:geometricPrecision;">Confections</div>
<div class="t" style="left:1151.50px;top:376px;font-size:9.8px;color:#3a4054;transform-origin:0 0;transform:scaleX(0.9184);text-rendering:geometricPrecision;">100 - 250 g bags</div>
<div class="t" style="left:1317.39px;top:376px;font-size:9.8px;color:#3a4054;transform-origin:0 0;transform:scaleX(0.9184);text-rendering:geometricPrecision;">15</div>
<div class="r" style="left:877px;top:391.14px;width:457px;height:0.8px;background:#f0f0f0;"></div>
<div class="t" style="left:883.50px;top:399px;font-size:9.8px;color:#3a4054;transform-origin:0 0;transform:scaleX(0.9184);text-rendering:geometricPrecision;">Gustaf's Knäckebröd</div>
<div class="t" style="left:1052.60px;top:399px;font-size:9.8px;color:#3a4054;transform-origin:0 0;transform:scaleX(0.9184);text-rendering:geometricPrecision;">Grains/Cereals</div>
<div class="t" style="left:1151.50px;top:399px;font-size:9.8px;color:#3a4054;transform-origin:0 0;transform:scaleX(0.9184);text-rendering:geometricPrecision;">24 - 500 g pkgs.</div>
<div class="t" style="left:1312.38px;top:399px;font-size:9.8px;color:#3a4054;transform-origin:0 0;transform:scaleX(0.9184);text-rendering:geometricPrecision;">104</div>
<div class="r" style="left:834px;top:414.01px;width:500px;height:1.65px;background:#474d61;"></div>
<div class="t" style="left:852.20px;top:427px;font-size:21.6px;color:#3a4054;font-weight:bold;text-rendering:geometricPrecision;">I</div>
<div class="t" style="left:883.50px;top:422px;font-size:9.8px;color:#3a4054;font-weight:bold;transform-origin:0 0;transform:scaleX(0.9184);text-rendering:geometricPrecision;">ProductName</div>
<div class="t" style="left:1052.60px;top:422px;font-size:9.8px;color:#3a4054;font-weight:bold;transform-origin:0 0;transform:scaleX(0.9184);text-rendering:geometricPrecision;">Category Name</div>
<div class="t" style="left:1151.50px;top:422px;font-size:9.8px;color:#3a4054;font-weight:bold;transform-origin:0 0;transform:scaleX(0.9184);text-rendering:geometricPrecision;">Quantity Per Unit</div>
<div class="t" style="left:1267.99px;top:422px;font-size:9.8px;color:#3a4054;font-weight:bold;transform-origin:0 0;transform:scaleX(0.9184);text-rendering:geometricPrecision;">Units In Stock</div>
<div class="r" style="left:877px;top:436.88px;width:457px;height:0.8px;background:#f0f0f0;"></div>
<div class="t" style="left:883.50px;top:445px;font-size:9.8px;color:#3a4054;transform-origin:0 0;transform:scaleX(0.9184);text-rendering:geometricPrecision;">Ikura</div>
<div class="t" style="left:1052.60px;top:445px;font-size:9.8px;color:#3a4054;transform-origin:0 0;transform:scaleX(0.9184);text-rendering:geometricPrecision;">Seafood</div>
<div class="t" style="left:1151.50px;top:445px;font-size:9.8px;color:#3a4054;transform-origin:0 0;transform:scaleX(0.9184);text-rendering:geometricPrecision;">12 - 200 ml jars</div>
<div class="t" style="left:1317.39px;top:445px;font-size:9.8px;color:#3a4054;transform-origin:0 0;transform:scaleX(0.9184);text-rendering:geometricPrecision;">31</div>
<div class="r" style="left:877px;top:459.75px;width:457px;height:0.8px;background:#f0f0f0;"></div>
<div class="t" style="left:883.50px;top:468px;font-size:9.8px;color:#3a4054;transform-origin:0 0;transform:scaleX(0.9184);text-rendering:geometricPrecision;">Inlagd Sill</div>
<div class="t" style="left:1052.60px;top:468px;font-size:9.8px;color:#3a4054;transform-origin:0 0;transform:scaleX(0.9184);text-rendering:geometricPrecision;">Seafood</div>
<div class="t" style="left:1151.50px;top:468px;font-size:9.8px;color:#3a4054;transform-origin:0 0;transform:scaleX(0.9184);text-rendering:geometricPrecision;">24 - 250 g  jars</div>
<div class="t" style="left:1313.05px;top:468px;font-size:9.8px;color:#3a4054;transform-origin:0 0;transform:scaleX(0.9184);text-rendering:geometricPrecision;">112</div>
<div class="r" style="left:877px;top:482.62px;width:457px;height:0.8px;background:#f0f0f0;"></div>
<div class="t" style="left:883.50px;top:490px;font-size:9.8px;color:#3a4054;transform-origin:0 0;transform:scaleX(0.9184);text-rendering:geometricPrecision;">Ipoh Coffee</div>
<div class="t" style="left:1052.60px;top:490px;font-size:9.8px;color:#3a4054;transform-origin:0 0;transform:scaleX(0.9184);text-rendering:geometricPrecision;">Beverages</div>
<div class="t" style="left:1151.50px;top:490px;font-size:9.8px;color:#3a4054;transform-origin:0 0;transform:scaleX(0.9184);text-rendering:geometricPrecision;">16 - 500 g tins</div>
<div class="t" style="left:1317.39px;top:490px;font-size:9.8px;color:#3a4054;transform-origin:0 0;transform:scaleX(0.9184);text-rendering:geometricPrecision;">17</div>
<div class="r" style="left:834px;top:505.49px;width:500px;height:1.65px;background:#474d61;"></div>
<div class="t" style="left:849.19px;top:518px;font-size:21.6px;color:#3a4054;font-weight:bold;text-rendering:geometricPrecision;">J</div>
<div class="t" style="left:883.50px;top:513px;font-size:9.8px;color:#3a4054;font-weight:bold;transform-origin:0 0;transform:scaleX(0.9184);text-rendering:geometricPrecision;">ProductName</div>
<div class="t" style="left:1052.60px;top:513px;font-size:9.8px;color:#3a4054;font-weight:bold;transform-origin:0 0;transform:scaleX(0.9184);text-rendering:geometricPrecision;">Category Name</div>
<div class="t" style="left:1151.50px;top:513px;font-size:9.8px;color:#3a4054;font-weight:bold;transform-origin:0 0;transform:scaleX(0.9184);text-rendering:geometricPrecision;">Quantity Per Unit</div>
<div class="t" style="left:1267.99px;top:513px;font-size:9.8px;color:#3a4054;font-weight:bold;transform-origin:0 0;transform:scaleX(0.9184);text-rendering:geometricPrecision;">Units In Stock</div>
<div class="r" style="left:877px;top:528.36px;width:457px;height:0.8px;background:#f0f0f0;"></div>
<div class="t" style="left:883.50px;top:536px;font-size:9.8px;color:#3a4054;transform-origin:0 0;transform:scaleX(0.9184);text-rendering:geometricPrecision;">Jack's New England Clam Chowder</div>
<div class="t" style="left:1052.60px;top:536px;font-size:9.8px;color:#3a4054;transform-origin:0 0;transform:scaleX(0.9184);text-rendering:geometricPrecision;">Seafood</div>
<div class="t" style="left:1151.50px;top:536px;font-size:9.8px;color:#3a4054;transform-origin:0 0;transform:scaleX(0.9184);text-rendering:geometricPrecision;">12 - 12 oz cans</div>
<div class="t" style="left:1317.39px;top:536px;font-size:9.8px;color:#3a4054;transform-origin:0 0;transform:scaleX(0.9184);text-rendering:geometricPrecision;">85</div>
<div class="r" style="left:834px;top:551.23px;width:500px;height:1.65px;background:#474d61;"></div>
<div class="t" style="left:847.40px;top:564px;font-size:21.6px;color:#3a4054;font-weight:bold;text-rendering:geometricPrecision;">K</div>
<div class="t" style="left:883.50px;top:559px;font-size:9.8px;color:#3a4054;font-weight:bold;transform-origin:0 0;transform:scaleX(0.9184);text-rendering:geometricPrecision;">ProductName</div>
<div class="t" style="left:1052.60px;top:559px;font-size:9.8px;color:#3a4054;font-weight:bold;transform-origin:0 0;transform:scaleX(0.9184);text-rendering:geometricPrecision;">Category Name</div>
<div class="t" style="left:1151.50px;top:559px;font-size:9.8px;color:#3a4054;font-weight:bold;transform-origin:0 0;transform:scaleX(0.9184);text-rendering:geometricPrecision;">Quantity Per Unit</div>
<div class="t" style="left:1267.99px;top:559px;font-size:9.8px;color:#3a4054;font-weight:bold;transform-origin:0 0;transform:scaleX(0.9184);text-rendering:geometricPrecision;">Units In Stock</div>
<div class="r" style="left:877px;top:574.10px;width:457px;height:0.8px;background:#f0f0f0;"></div>
<div class="t" style="left:883.50px;top:582px;font-size:9.8px;color:#3a4054;transform-origin:0 0;transform:scaleX(0.9184);text-rendering:geometricPrecision;">Konbu</div>
<div class="t" style="left:1052.60px;top:582px;font-size:9.8px;color:#3a4054;transform-origin:0 0;transform:scaleX(0.9184);text-rendering:geometricPrecision;">Seafood</div>
<div class="t" style="left:1151.50px;top:582px;font-size:9.8px;color:#3a4054;transform-origin:0 0;transform:scaleX(0.9184);text-rendering:geometricPrecision;">2 kg box</div>
<div class="t" style="left:1317.39px;top:582px;font-size:9.8px;color:#3a4054;transform-origin:0 0;transform:scaleX(0.9184);text-rendering:geometricPrecision;">24</div>
<div class="r" style="left:834px;top:596.97px;width:500px;height:1.65px;background:#474d61;"></div>
<div class="t" style="left:848.60px;top:610px;font-size:21.6px;color:#3a4054;font-weight:bold;text-rendering:geometricPrecision;">L</div>
<div class="t" style="left:883.50px;top:605px;font-size:9.8px;color:#3a4054;font-weight:bold;transform-origin:0 0;transform:scaleX(0.9184);text-rendering:geometricPrecision;">ProductName</div>
<div class="t" style="left:1052.60px;top:605px;font-size:9.8px;color:#3a4054;font-weight:bold;transform-origin:0 0;transform:scaleX(0.9184);text-rendering:geometricPrecision;">Category Name</div>
<div class="t" style="left:1151.50px;top:605px;font-size:9.8px;color:#3a4054;font-weight:bold;transform-origin:0 0;transform:scaleX(0.9184);text-rendering:geometricPrecision;">Quantity Per Unit</div>
<div class="t" style="left:1267.99px;top:605px;font-size:9.8px;color:#3a4054;font-weight:bold;transform-origin:0 0;transform:scaleX(0.9184);text-rendering:geometricPrecision;">Units In Stock</div>
<div class="r" style="left:877px;top:619.84px;width:457px;height:0.8px;background:#f0f0f0;"></div>
<div class="t" style="left:883.50px;top:628px;font-size:9.8px;color:#3a4054;transform-origin:0 0;transform:scaleX(0.9184);text-rendering:geometricPrecision;">Lakkalikööri</div>
<div class="t" style="left:1052.60px;top:628px;font-size:9.8px;color:#3a4054;transform-origin:0 0;transform:scaleX(0.9184);text-rendering:geometricPrecision;">Beverages</div>
<div class="t" style="left:1151.50px;top:628px;font-size:9.8px;color:#3a4054;transform-origin:0 0;transform:scaleX(0.9184);text-rendering:geometricPrecision;">500 ml</div>
<div class="t" style="left:1317.39px;top:628px;font-size:9.8px;color:#3a4054;transform-origin:0 0;transform:scaleX(0.9184);text-rendering:geometricPrecision;">57</div>
<div class="r" style="left:877px;top:642.71px;width:457px;height:0.8px;background:#f0f0f0;"></div>
<div class="t" style="left:883.50px;top:651px;font-size:9.8px;color:#3a4054;transform-origin:0 0;transform:scaleX(0.9184);text-rendering:geometricPrecision;">Laughing Lumberjack Lager</div>
<div class="t" style="left:1052.60px;top:651px;font-size:9.8px;color:#3a4054;transform-origin:0 0;transform:scaleX(0.9184);text-rendering:geometricPrecision;">Beverages</div>
<div class="t" style="left:1151.50px;top:651px;font-size:9.8px;color:#3a4054;transform-origin:0 0;transform:scaleX(0.9184);text-rendering:geometricPrecision;">24 - 12 oz bottles</div>
<div class="t" style="left:1317.39px;top:651px;font-size:9.8px;color:#3a4054;transform-origin:0 0;transform:scaleX(0.9184);text-rendering:geometricPrecision;">52</div>
<div class="r" style="left:877px;top:665.58px;width:457px;height:0.8px;background:#f0f0f0;"></div>
<div class="t" style="left:883.50px;top:673px;font-size:9.8px;color:#3a4054;transform-origin:0 0;transform:scaleX(0.9184);text-rendering:geometricPrecision;">Longlife Tofu</div>
<div class="t" style="left:1052.60px;top:673px;font-size:9.8px;color:#3a4054;transform-origin:0 0;transform:scaleX(0.9184);text-rendering:geometricPrecision;">Produce</div>
<div class="t" style="left:1151.50px;top:673px;font-size:9.8px;color:#3a4054;transform-origin:0 0;transform:scaleX(0.9184);text-rendering:geometricPrecision;">5 kg pkg.</div>
<div class="t" style="left:1322.39px;top:673px;font-size:9.8px;color:#3a4054;transform-origin:0 0;transform:scaleX(0.9184);text-rendering:geometricPrecision;">4</div>
<div class="r" style="left:877px;top:688.45px;width:457px;height:0.8px;background:#f0f0f0;"></div>
<div class="t" style="left:883.50px;top:696px;font-size:9.8px;color:#3a4054;transform-origin:0 0;transform:scaleX(0.9184);text-rendering:geometricPrecision;">Louisiana Fiery Hot Pepper Sauce</div>
<div class="t" style="left:1052.60px;top:696px;font-size:9.8px;color:#3a4054;transform-origin:0 0;transform:scaleX(0.9184);text-rendering:geometricPrecision;">Condiments</div>
<div class="t" style="left:1151.50px;top:696px;font-size:9.8px;color:#3a4054;transform-origin:0 0;transform:scaleX(0.9184);text-rendering:geometricPrecision;">32 - 8 oz bottles</div>
<div class="t" style="left:1317.39px;top:696px;font-size:9.8px;color:#3a4054;transform-origin:0 0;transform:scaleX(0.9184);text-rendering:geometricPrecision;">76</div>
<div class="r" style="left:877px;top:711.32px;width:457px;height:0.8px;background:#f0f0f0;"></div>
<div class="t" style="left:883.50px;top:719px;font-size:9.8px;color:#3a4054;transform-origin:0 0;transform:scaleX(0.9184);text-rendering:geometricPrecision;">Louisiana Hot Spiced Okra</div>
<div class="t" style="left:1052.60px;top:719px;font-size:9.8px;color:#3a4054;transform-origin:0 0;transform:scaleX(0.9184);text-rendering:geometricPrecision;">Condiments</div>
<div class="t" style="left:1151.50px;top:719px;font-size:9.8px;color:#3a4054;transform-origin:0 0;transform:scaleX(0.9184);text-rendering:geometricPrecision;">24 - 8 oz jars</div>
<div class="t" style="left:1322.39px;top:719px;font-size:9.8px;color:#3a4054;transform-origin:0 0;transform:scaleX(0.9184);text-rendering:geometricPrecision;">4</div>
<div class="r" style="left:834px;top:734.19px;width:500px;height:1.65px;background:#474d61;"></div>
<div class="t" style="left:846.20px;top:747px;font-size:21.6px;color:#3a4054;font-weight:bold;text-rendering:geometricPrecision;">M</div>
<div class="t" style="left:883.50px;top:742px;font-size:9.8px;color:#3a4054;font-weight:bold;transform-origin:0 0;transform:scaleX(0.9184);text-rendering:geometricPrecision;">ProductName</div>
<div class="t" style="left:1052.60px;top:742px;font-size:9.8px;color:#3a4054;font-weight:bold;transform-origin:0 0;transform:scaleX(0.9184);text-rendering:geometricPrecision;">Category Name</div>
<div class="t" style="left:1151.50px;top:742px;font-size:9.8px;color:#3a4054;font-weight:bold;transform-origin:0 0;transform:scaleX(0.9184);text-rendering:geometricPrecision;">Quantity Per Unit</div>
<div class="t" style="left:1267.99px;top:742px;font-size:9.8px;color:#3a4054;font-weight:bold;transform-origin:0 0;transform:scaleX(0.9184);text-rendering:geometricPrecision;">Units In Stock</div>
<div class="r" style="left:877px;top:757.06px;width:457px;height:0.8px;background:#f0f0f0;"></div>
<div class="t" style="left:883.50px;top:765px;font-size:9.8px;color:#3a4054;transform-origin:0 0;transform:scaleX(0.9184);text-rendering:geometricPrecision;">Manjimup Dried Apples</div>
<div class="t" style="left:1052.60px;top:765px;font-size:9.8px;color:#3a4054;transform-origin:0 0;transform:scaleX(0.9184);text-rendering:geometricPrecision;">Produce</div>
<div class="t" style="left:1151.50px;top:765px;font-size:9.8px;color:#3a4054;transform-origin:0 0;transform:scaleX(0.9184);text-rendering:geometricPrecision;">50 - 300 g pkgs.</div>
<div class="t" style="left:1317.39px;top:765px;font-size:9.8px;color:#3a4054;transform-origin:0 0;transform:scaleX(0.9184);text-rendering:geometricPrecision;">20</div>
<div class="r" style="left:877px;top:779.93px;width:457px;height:0.8px;background:#f0f0f0;"></div>
<div class="t" style="left:883.50px;top:788px;font-size:9.8px;color:#3a4054;transform-origin:0 0;transform:scaleX(0.9184);text-rendering:geometricPrecision;">Mascarpone Fabioli</div>
<div class="t" style="left:1052.60px;top:788px;font-size:9.8px;color:#3a4054;transform-origin:0 0;transform:scaleX(0.9184);text-rendering:geometricPrecision;">Dairy Products</div>
<div class="t" style="left:1151.50px;top:788px;font-size:9.8px;color:#3a4054;transform-origin:0 0;transform:scaleX(0.9184);text-rendering:geometricPrecision;">24 - 200 g pkgs.</div>
<div class="t" style="left:1322.39px;top:788px;font-size:9.8px;color:#3a4054;transform-origin:0 0;transform:scaleX(0.9184);text-rendering:geometricPrecision;">9</div>
<div class="r" style="left:877px;top:802.80px;width:457px;height:0.8px;background:#f0f0f0;"></div>
<div class="t" style="left:883.50px;top:811px;font-size:9.8px;color:#3a4054;transform-origin:0 0;transform:scaleX(0.9184);text-rendering:geometricPrecision;">Maxilaku</div>
<div class="t" style="left:1052.60px;top:811px;font-size:9.8px;color:#3a4054;transform-origin:0 0;transform:scaleX(0.9184);text-rendering:geometricPrecision;">Confections</div>
<div class="t" style="left:1151.50px;top:811px;font-size:9.8px;color:#3a4054;transform-origin:0 0;transform:scaleX(0.9184);text-rendering:geometricPrecision;">24 - 50 g pkgs.</div>
<div class="t" style="left:1317.39px;top:811px;font-size:9.8px;color:#3a4054;transform-origin:0 0;transform:scaleX(0.9184);text-rendering:geometricPrecision;">10</div>
<div class="r" style="left:877px;top:825.67px;width:457px;height:0.8px;background:#f0f0f0;"></div>
<div class="t" style="left:883.50px;top:834px;font-size:9.8px;color:#3a4054;transform-origin:0 0;transform:scaleX(0.9184);text-rendering:geometricPrecision;">Mishi Kobe Niku</div>
<div class="t" style="left:1052.60px;top:834px;font-size:9.8px;color:#3a4054;transform-origin:0 0;transform:scaleX(0.9184);text-rendering:geometricPrecision;">Meat/Poultry</div>
<div class="t" style="left:1151.50px;top:834px;font-size:9.8px;color:#3a4054;transform-origin:0 0;transform:scaleX(0.9184);text-rendering:geometricPrecision;">18 - 500 g pkgs.</div>
<div class="t" style="left:1317.39px;top:834px;font-size:9.8px;color:#3a4054;transform-origin:0 0;transform:scaleX(0.9184);text-rendering:geometricPrecision;">29</div>
<div class="r" style="left:877px;top:848.54px;width:457px;height:0.8px;background:#f0f0f0;"></div>
<div class="t" style="left:883.50px;top:856px;font-size:9.8px;color:#3a4054;transform-origin:0 0;transform:scaleX(0.9184);text-rendering:geometricPrecision;">Mozzarella di Giovanni</div>
<div class="t" style="left:1052.60px;top:856px;font-size:9.8px;color:#3a4054;transform-origin:0 0;transform:scaleX(0.9184);text-rendering:geometricPrecision;">Dairy Products</div>
<div class="t" style="left:1151.50px;top:856px;font-size:9.8px;color:#3a4054;transform-origin:0 0;transform:scaleX(0.9184);text-rendering:geometricPrecision;">24 - 200 g pkgs.</div>
<div class="t" style="left:1317.39px;top:856px;font-size:9.8px;color:#3a4054;transform-origin:0 0;transform:scaleX(0.9184);text-rendering:geometricPrecision;">14</div>
</div></div>
<svg class="a" style="left:0;top:160px" width="54" height="180" viewBox="0 160 54 180" fill="none" stroke="#4b4b4b" stroke-width="2" stroke-linejoin="round">
<path d="M21 175 H17.5 Q16 175 16 176.5 V191.5 Q16 193 17.5 193 H28.5 Q30 193 30 191.5 V188"/>
<path d="M30 169 H23.7 Q22.2 169 22.2 170.5 V185.5 Q22.2 187 23.7 187 H34.5 Q36 187 36 185.5 V175"/>
<path d="M30.3 167.6 L37.4 174.7 H30.3 Z" fill="#cdcdcd" stroke="none"/>
<path d="M30 168.2 V174 Q30 175 31 175 H36.6" />
<path d="M20 213.2 H34 V235.8 L27 229.4 L20 235.8 Z" stroke-linejoin="miter"/>
<path d="M34 274 V261 A6 6 0 0 0 22 261 V277 A4.5 4.5 0 0 0 31 277 V263.5 A2.5 2.5 0 0 0 26 263.5 V274" stroke-linecap="butt"/>
<path d="M17 303.2 H37 Q37.8 303.2 37.8 304 V318 Q37.8 318.8 37 318.8 H24.5 L19.6 323.8 V318.8 H17 Q16.2 318.8 16.2 318 V304 Q16.2 303.2 17 303.2 Z"/>
<path d="M21 309 H33 M21 313 H29" stroke-linejoin="miter"/>
</svg>
<div class="r" style="left:1482px;top:158px;width:17px;height:793px;background:#f0f0f0;"></div>
<div class="r" style="left:1483px;top:159px;width:15px;height:16px;background:#ffffff;border:1px solid #a6a6a6;box-sizing:border-box;"></div>
<div class="r" style="left:1483px;top:175px;width:15px;height:355px;background:#ffffff;border:1px solid #a6a6a6;box-sizing:border-box;"></div>
<div class="r" style="left:1483px;top:917px;width:15px;height:16px;background:#ffffff;border:1px solid #a6a6a6;box-sizing:border-box;"></div>
<svg class="a" style="left:1483px;top:159px" width="15" height="16" viewBox="0 0 15 16"><path d="M4.2 9.6 H10.8 L7.5 6.2 Z" fill="#808080"/></svg>
<svg class="a" style="left:1483px;top:917px" width="15" height="16" viewBox="0 0 15 16"><path d="M4.2 6.6 H10.8 L7.5 10 Z" fill="#808080"/></svg>
<div class="r" style="left:54px;top:934px;width:1428px;height:17px;background:#f0f0f0;"></div>
<div class="r" style="left:56px;top:935px;width:15px;height:14px;background:#ffffff;border:1px solid #e4e4e4;box-sizing:border-box;"></div>
<div class="r" style="left:1466px;top:935px;width:15px;height:14px;background:#ffffff;border:1px solid #e4e4e4;box-sizing:border-box;"></div>
<svg class="a" style="left:56px;top:935px" width="15" height="14" viewBox="0 0 15 14"><path d="M9 3.6 V10.4 L5.5 7 Z" fill="#c8c8c8"/></svg>
<svg class="a" style="left:1466px;top:935px" width="15" height="14" viewBox="0 0 15 14"><path d="M6 3.6 V10.4 L9.5 7 Z" fill="#c8c8c8"/></svg>
<div class="r" style="left:0px;top:36px;width:1px;height:916px;background:#106ebe;"></div>
<div class="r" style="left:1499px;top:36px;width:1px;height:916px;background:#106ebe;"></div>
<div class="r" style="left:0px;top:951px;width:1500px;height:1px;background:#106ebe;"></div>
</body></html>
